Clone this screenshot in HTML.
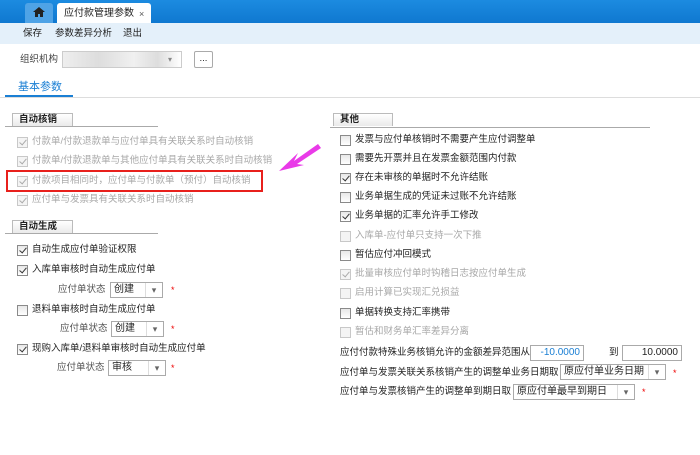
<!DOCTYPE html>
<html><head><meta charset="utf-8"><style>
*{margin:0;padding:0;box-sizing:border-box}
body{width:700px;height:455px;background:#fff;position:relative;overflow:hidden;font-family:"Liberation Sans","Noto Sans CJK SC",sans-serif;font-size:9.5px;color:#222}
.a{position:absolute;white-space:nowrap;line-height:12px}
.cb{position:absolute;width:11px;height:11px;border:1px solid #8a8a8a;background:linear-gradient(#e8e8e8,#fff)}
.cb.d{border-color:#c8c8c8;background:#f4f4f4}
.ck::after{content:"";position:absolute;left:3px;top:0px;width:3px;height:6px;border:solid #333;border-width:0 1.5px 1.5px 0;transform:rotate(40deg)}
.cb.d.ck::after{border-color:#aaa}
.g{color:#a8a8a8}
.hd{position:absolute;height:13px;border:1px solid #bbb;border-bottom:none;background:linear-gradient(#fff,#eaeaea);font-weight:bold;padding-left:6px;line-height:12px}
.ln{position:absolute;height:1px;background:#aaa}
.sel{position:absolute;height:16px;border:1px solid #aaa;background:#fff;padding-left:3px;line-height:14px;font-size:10px}
.sel::after{content:"▾";position:absolute;right:0;top:0;width:16px;height:14px;border-left:1px solid #ddd;text-align:center;color:#666;font-size:9px}
.st{position:absolute;color:#e00;font-size:9px}
.inp{position:absolute;height:16px;border:1px solid #aaa;text-align:right;padding-right:3px;line-height:14px;font-size:10px}
</style></head><body>
<div style="position:absolute;left:0;top:0;width:700px;height:23px;background:linear-gradient(#1c8be0,#0f78d0)"></div>
<div style="position:absolute;left:25px;top:3px;width:28px;height:20px;background:#4fa3e6;border-radius:3px 3px 0 0"></div>
<svg style="position:absolute;left:33px;top:7px" width="12" height="11"><path d="M6 0 L12 5 L10 5 L10 10 L7 10 L7 7 L5 7 L5 10 L2 10 L2 5 L0 5Z" fill="#222"/></svg>
<div style="position:absolute;left:57px;top:3px;width:94px;height:20px;background:#fff;border-radius:3px 3px 0 0"></div>
<div class="a" style="left:64px;top:8px;font-size:10px">应付款管理参数</div>
<div class="a" style="left:139px;top:8px;color:#555;font-size:9px">×</div>
<div style="position:absolute;left:0;top:23px;width:700px;height:21px;background:#e4f0fa"></div>
<div class="a" style="left:23px;top:28px">保存</div>
<div class="a" style="left:55px;top:28px">参数差异分析</div>
<div class="a" style="left:123px;top:28px">退出</div>
<div class="a" style="left:20px;top:54px;color:#444">组织机构</div>
<div style="position:absolute;left:62px;top:51px;width:120px;height:17px;border:1px solid #ccc;background:linear-gradient(90deg,#eee,#ddd 30%,#f0f0f0 60%,#ddd 80%,#fff)"></div>
<div class="a" style="left:168px;top:54px;color:#888;font-size:8px">▾</div>
<div style="position:absolute;left:194px;top:51px;width:19px;height:17px;border:1px solid #aaa;border-radius:2px;text-align:center;line-height:14px">...</div>
<div class="a" style="left:18px;top:81px;color:#1a7fd4;font-size:11px">基本参数</div>
<div style="position:absolute;left:5px;top:95px;width:68px;height:3px;background:#1a7fd4"></div>
<div style="position:absolute;left:0;top:97px;width:700px;height:1px;background:#ddd"></div>

<div class="hd" style="left:12px;top:113px;width:61px">自动核销</div><div class="ln" style="left:5px;top:126px;width:153px"></div>
<div class="cb d ck" style="left:17px;top:137px"></div><div class="a g" style="left:32px;top:136px">付款单/付款退款单与应付单具有关联关系时自动核销</div>
<div class="cb d ck" style="left:17px;top:156px"></div><div class="a g" style="left:32px;top:155px">付款单/付款退款单与其他应付单具有关联关系时自动核销</div>
<div class="cb d ck" style="left:17px;top:176px"></div><div class="a g" style="left:32px;top:175px">付款项目相同时，应付单与付款单（预付）自动核销</div>
<div style="position:absolute;left:6px;top:170px;width:257px;height:22px;border:2px solid #e8201c"></div>
<div class="cb d ck" style="left:17px;top:195px"></div><div class="a g" style="left:32px;top:194px">应付单与发票具有关联关系时自动核销</div>
<svg style="position:absolute;left:270px;top:135px" width="55" height="45"><path d="M48 9 L24 26 L28 18 L9 36 L34 30 L27 29 L51 13Z" fill="#e93ae8"/></svg>

<div class="hd" style="left:12px;top:220px;width:61px">自动生成</div><div class="ln" style="left:5px;top:233px;width:153px"></div>
<div class="cb ck" style="left:17px;top:245px"></div><div class="a" style="left:32px;top:244px">自动生成应付单验证权限</div>
<div class="cb ck" style="left:17px;top:265px"></div><div class="a" style="left:32px;top:264px">入库单审核时自动生成应付单</div>
<div class="a" style="left:58px;top:284px;color:#555">应付单状态</div><div class="sel" style="left:110px;top:282px;width:53px">创建</div><div class="st" style="left:171px;top:285px">*</div>
<div class="cb" style="left:17px;top:305px"></div><div class="a" style="left:32px;top:304px">退料单审核时自动生成应付单</div>
<div class="a" style="left:60px;top:323px;color:#555">应付单状态</div><div class="sel" style="left:111px;top:321px;width:53px">创建</div><div class="st" style="left:171px;top:324px">*</div>
<div class="cb ck" style="left:17px;top:344px"></div><div class="a" style="left:32px;top:343px">现购入库单/退料单审核时自动生成应付单</div>
<div class="a" style="left:57px;top:362px;color:#555">应付单状态</div><div class="sel" style="left:108px;top:360px;width:58px">审核</div><div class="st" style="left:171px;top:363px">*</div>

<div class="hd" style="left:333px;top:113px;width:60px">其他</div><div class="ln" style="left:330px;top:127px;width:320px"></div>
<div class="cb" style="left:340px;top:135px"></div><div class="a" style="left:355px;top:134px">发票与应付单核销时不需要产生应付调整单</div>
<div class="cb" style="left:340px;top:154px"></div><div class="a" style="left:355px;top:153px">需要先开票并且在发票金额范围内付款</div>
<div class="cb ck" style="left:340px;top:173px"></div><div class="a" style="left:355px;top:172px">存在未审核的单据时不允许结账</div>
<div class="cb" style="left:340px;top:192px"></div><div class="a" style="left:355px;top:191px">业务单据生成的凭证未过账不允许结账</div>
<div class="cb ck" style="left:340px;top:211px"></div><div class="a" style="left:355px;top:210px">业务单据的汇率允许手工修改</div>
<div class="cb d" style="left:340px;top:231px"></div><div class="a g" style="left:355px;top:230px">入库单-应付单只支持一次下推</div>
<div class="cb" style="left:340px;top:250px"></div><div class="a" style="left:355px;top:249px">暂估应付冲回模式</div>
<div class="cb d ck" style="left:340px;top:269px"></div><div class="a g" style="left:355px;top:268px">批量审核应付单时钩稽日志按应付单生成</div>
<div class="cb d" style="left:340px;top:288px"></div><div class="a g" style="left:355px;top:287px">启用计算已实现汇兑损益</div>
<div class="cb" style="left:340px;top:308px"></div><div class="a" style="left:355px;top:307px">单据转换支持汇率携带</div>
<div class="cb d" style="left:340px;top:327px"></div><div class="a g" style="left:355px;top:326px">暂估和财务单汇率差异分离</div>
<div class="a" style="left:340px;top:347px">应付付款特殊业务核销允许的金额差异范围从</div>
<div class="inp" style="left:530px;top:345px;width:54px;color:#1a7fd4">-10.0000</div>
<div class="a" style="left:609px;top:347px">到</div>
<div class="inp" style="left:622px;top:345px;width:60px">10.0000</div>
<div class="a" style="left:340px;top:367px">应付单与发票关联关系核销产生的调整单业务日期取</div>
<div class="sel" style="left:560px;top:364px;width:106px">原应付单业务日期</div><div class="st" style="left:673px;top:368px">*</div>
<div class="a" style="left:340px;top:386px">应付单与发票核销产生的调整单到期日取</div>
<div class="sel" style="left:513px;top:384px;width:122px">原应付单最早到期日</div><div class="st" style="left:642px;top:387px">*</div>
</body></html>
